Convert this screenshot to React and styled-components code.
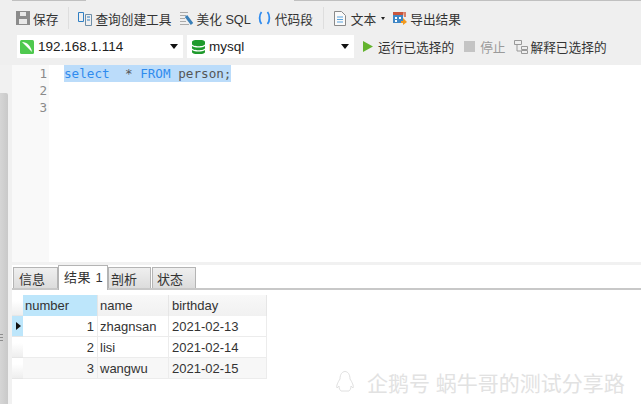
import React from "react";
import styled, { createGlobalStyle } from "styled-components";

const Global = createGlobalStyle`
  html, body { margin: 0; padding: 0; background: #fff; }
  body { font-family: "Liberation Sans", "Noto Sans CJK SC", sans-serif; }
`;

const Page = styled.div`
  width: 641px;
  height: 404px;
  display: flex;
  flex-direction: column;
  overflow: hidden;
  position: relative;
  background: #f1f1f1;
`;

const Bars = styled.div`
  height: 65px;
  flex: none;
  background: #efefef;
  box-sizing: border-box;
`;

const TopEdge = styled.div`
  height: 1px;
  display: flex;
  padding-left: 12px;
  margin-bottom: 6px;
`;

const EdgePiece = styled.span`
  background: #c0c0c0;
  width: ${p => p.$w}px;
  margin-right: ${p => p.$mr || 0}px;
`;

const Row = styled.div`
  display: flex;
  align-items: center;
  padding-left: 16px;
  height: ${p => p.$h}px;
  margin-bottom: ${p => p.$mb || 0}px;
`;

const Tool = styled.div`
  display: flex;
  align-items: center;
  gap: ${p => p.$gap || 3}px;
  font-size: 12.7px;
  color: ${p => (p.$off ? "#9a9a9a" : "#333")};
  margin-left: ${p => p.$ml || 0}px;
  white-space: nowrap;
`;

const Sep = styled.div`
  width: 1px;
  height: 22px;
  background: #dedede;
  margin-left: ${p => p.$ml}px;
`;

const SmallCaret = styled.span`
  border-left: 2.5px solid transparent;
  border-right: 2.5px solid transparent;
  border-top: 3px solid #222;
`;

const Select = styled.div`
  width: ${p => p.$w}px;
  height: 23px;
  margin-left: ${p => p.$ml || 0}px;
  background: #fff;
  display: flex;
  align-items: center;
  gap: 4px;
  padding-left: ${p => p.$pl}px;
  box-sizing: border-box;
  font-size: 13.5px;
  color: #222;
  position: relative;
`;

const Caret = styled.span`
  position: absolute;
  right: 5px;
  top: 9px;
  border-left: 4px solid transparent;
  border-right: 4px solid transparent;
  border-top: 5px solid #111;
`;

const Body = styled.div`
  flex: 1;
  min-height: 0;
  display: flex;
`;

const Rail = styled.div`
  width: 8px;
  flex: none;
  margin: 28px 4px 0 0;
  background: linear-gradient(90deg, #d6d6d6, #c9c9c9);
  border-top-right-radius: 2px;
  position: relative;
`;

const Grip = styled.span`
  position: absolute;
  left: 0;
  top: 241px;
  width: 3px;
  height: 7px;
  background: repeating-linear-gradient(180deg, #8e8e8e 0 1px, transparent 1px 3px);
`;

const Main = styled.div`
  flex: 1;
  min-width: 0;
  display: flex;
  flex-direction: column;
  background: #fff;
`;

const Editor = styled.div`
  height: 197px;
  flex: none;
  display: flex;
`;

const Gutter = styled.div`
  width: 37px;
  background: #f9f9f9;
  flex: none;
  padding: 0 2px 0 0;
  text-align: right;
  box-sizing: border-box;
`;

const Code = styled.div`
  padding-left: 15px;
`;

const Line = styled.div`
  font-family: "DejaVu Sans Mono", monospace;
  font-size: 12.65px;
  line-height: 17px;
  color: ${p => p.$c || "#555"};
  white-space: pre;
`;

const Picked = styled.span`
  display: inline-block;
  background: #bbdcfa;
`;

const Kw = styled.span`
  color: #2f8bee;
`;

const Split = styled.div`
  height: 3px;
  flex: none;
  background: #f1f1f1;
`;

const Tabs = styled.div`
  height: 25px;
  flex: none;
  display: flex;
  align-items: flex-end;
  padding-left: 1px;
  border-bottom: 2px solid #c8c8c8;
  box-sizing: border-box;
`;

const Tab = styled.div`
  width: ${p => p.$w}px;
  height: ${p => (p.$on ? 25 : 21)}px;
  padding-left: ${p => p.$pl}px;
  margin-right: ${p => p.$mr || 0}px;
  font-size: 13px;
  display: flex;
  align-items: center;
  flex: none;
  color: #333;
  box-sizing: border-box;
  background: ${p => (p.$on ? "#fff" : "linear-gradient(180deg, #efefef, #dcdcdc)")};
  border: 1px solid #b4b4b4;
  border-bottom: none;
  margin-bottom: ${p => (p.$on ? -2 : 0)}px;
  letter-spacing: ${p => (p.$on ? 0.6 : 0)}px;
  padding-bottom: ${p => (p.$on ? 3 : 0)}px;
`;

const Grid = styled.div`
  margin-top: 5px;
  display: grid;
  grid-template-columns: 11px 75px 71px 98px;
  width: 255px;
  font-size: 13px;
  color: #333;
`;

const Head = styled.div`
  height: 21px;
  line-height: 21px;
  padding-left: ${p => p.$pl || 2}px;
  background: ${p => (p.$on ? "#bde6fb" : "linear-gradient(180deg, #f8f8f8, #f1f1f1)")};
  border-right: 1px solid #e6e6e6;
  box-sizing: border-box;
`;

const Cell = styled.div`
  height: 21px;
  line-height: 22px;
  padding: 0 ${p => (p.$num ? 3 : 2)}px 0 ${p => p.$pl || 2}px;
  background: ${p => (p.$alt ? "#f7f7f7" : "#fff")};
  border-right: 1px solid #ececec;
  border-bottom: 1px solid #ececec;
  box-sizing: border-box;
  text-align: ${p => (p.$num ? "right" : "left")};
`;

const Marker = styled.div`
  height: 21px;
  background: ${p => (p.$on ? "#bde6fb" : "linear-gradient(180deg, #fff 30%, #eeeeee)")};
  border-bottom: 1px solid #e6e6e6;
  box-sizing: border-box;
  position: relative;
`;

const Arrow = styled.span`
  position: absolute;
  left: 4px;
  top: 6px;
  border-top: 4px solid transparent;
  border-bottom: 4px solid transparent;
  border-left: 5px solid #111;
`;

const Mark = styled.div`
  position: absolute;
  left: 335px;
  top: 367px;
  display: flex;
  align-items: center;
  gap: 12px;
  font-size: 21px;
  color: #e2e2e2;
  white-space: nowrap;
`;

const Save = () => (
  <svg width="14" height="14" viewBox="0 0 14 14"><path d="M0 0h14v14H0z" fill="#8b8b8b" /><path d="M4 1h6v4H4z" fill="#e8e8e8" /><path d="M3 8h8v5H3z" fill="#e8e8e8" /></svg>
);
const Build = () => (
  <svg width="14" height="15" viewBox="0 0 14 15" fill="none"><path d="M.5 1.500h5v9h-5z" stroke="#2f7fc4" /><path d="M7.500 3.500h6v11h-6z" stroke="#6f8fa8" /><path d="M9 6h3M9 9h3" stroke="#2f7fc4" /></svg>
);
const Beautify = () => (
  <svg width="14" height="15" viewBox="0 0 14 15" fill="none"><path d="M0 1.500h8M0 4.500h6M0 7.500h5M0 10.500h6M0 13.500h9" stroke="#aaa" /><path d="M6 5l6 8" stroke="#3a7fb8" strokeWidth="3" /></svg>
);
const Braces = () => (
  <svg width="13" height="14" viewBox="0 0 13 14" fill="none" stroke="#2f8bee" strokeWidth="1.800"><path d="M3.500 1C1 4 1 10 3.500 13" /><path d="M9.500 1c2.500 3 2.500 9 0 12" /></svg>
);
const Doc = () => (
  <svg width="12" height="15" viewBox="0 0 12 15" fill="none"><path d="M.5.500h7l4 4v10H.5z" fill="#fafafa" stroke="#8a8a8a" /><path d="M3 6h6M3 8.500h6M3 11h6" stroke="#5ba3dc" /></svg>
);
const Export = () => (
  <svg width="14" height="14" viewBox="0 0 14 14"><path d="M0 1h10v11H0z" fill="#3f87c6" /><path d="M0 1h10v3H0z" fill="#c9553c" /><path d="M2 6h2v2H2zM6 6h2v2H6zM2 9h2v2H2z" fill="#fff" /><path d="M10 1h3v5h-2z" fill="#d9826b" /><path d="M8 10h2V7l4 4-4 3v-2H8z" fill="#f29a1f" /></svg>
);
const Conn = () => (
  <svg width="14" height="14" viewBox="0 0 14 14"><rect width="14" height="14" rx="1.500" fill="#4fc94f" /><path d="M2 2c5 0 9 4 10 10L8 8z" fill="#fff" /></svg>
);
const Db = () => (
  <svg width="13" height="14" viewBox="0 0 13 14"><path d="M0 2c0-3 13-3 13 0v2c0 3-13 3-13 0zM0 6c3 2 10 2 13 0v2c0 3-13 3-13 0zM0 10c3 2 10 2 13 0v2c0 3-13 3-13 0z" fill="#1f9a2c" /></svg>
);
const Play = () => (
  <svg width="10" height="11" viewBox="0 0 10 11"><path d="M0 0l10 5.500L0 11z" fill="#63b32e" /></svg>
);
const Stop = () => (
  <svg width="11" height="11" viewBox="0 0 11 11"><path d="M0 0h11v11H0z" fill="#c4c4c4" /></svg>
);
const Explain = () => (
  <svg width="14" height="14" viewBox="0 0 14 14" fill="none" stroke="#999"><path d="M.5.500h7v4h-7zM7.500 6.500h6v3h-6zM7.500 10.500h6v3h-6zM3 5v6h4" /></svg>
);
const Qq = () => (
  <svg width="20" height="24" viewBox="0 0 20 24" fill="none" stroke="#e0e0e0" strokeWidth="1"><path d="M5 9c0-10 10-10 10 0 2 3 4 7 3 9l-2-2c0 3-1 4-2 5H6c-1-1-2-2-2-5l-2 2c-1-2 1-6 3-9z" /></svg>
);

const rows = [
  ["1", "zhagnsan", "2021-02-13"],
  ["2", "lisi", "2021-02-14"],
  ["3", "wangwu", "2021-02-15"],
];

export default function App() {
  return (
    <Page>
      <Global />
      <Bars>
        <TopEdge>
          <EdgePiece $w={74} $mr={208} />
          <EdgePiece $w={347} />
        </TopEdge>
        <Row $h={22} $mb={6}>
          <Tool><Save />保存</Tool>
          <Sep $ml={10} />
          <Tool $ml={9}><Build />查询创建工具</Tool>
          <Tool $ml={8}><Beautify />美化 SQL</Tool>
          <Tool $ml={7} $gap={4}><Braces />代码段</Tool>
          <Sep $ml={10} />
          <Tool $ml={10} $gap={5}><Doc />文本<SmallCaret /></Tool>
          <Tool $ml={8}><Export />导出结果</Tool>
        </Row>
        <Row $h={23}>
          <Select $w={166} $ml={1} $pl={3}><Conn />192.168.1.114<Caret /></Select>
          <Select $w={167} $ml={4} $pl={5}><Db />mysql<Caret /></Select>
          <Tool $ml={9} $gap={5}><Play />运行已选择的</Tool>
          <Tool $ml={10} $gap={5} $off><Stop />停止</Tool>
          <Tool $ml={8}><Explain />解释已选择的</Tool>
        </Row>
      </Bars>
      <Body>
        <Rail><Grip /></Rail>
        <Main>
          <Editor>
            <Gutter>
              <Line $c="#8a8a8a">1</Line>
              <Line $c="#8a8a8a">2</Line>
              <Line $c="#8a8a8a">3</Line>
            </Gutter>
            <Code>
              <Line><Picked><Kw>select</Kw>  * <Kw>FROM</Kw> person;</Picked></Line>
            </Code>
          </Editor>
          <Split />
          <Tabs>
            <Tab $w={45} $pl={5}>信息</Tab>
            <Tab $on $w={50} $pl={5}>结果 1</Tab>
            <Tab $w={43} $pl={2} $mr={1}>剖析</Tab>
            <Tab $w={44} $pl={4}>状态</Tab>
          </Tabs>
          <Grid>
            <Marker />
            <Head $on>number</Head>
            <Head>name</Head>
            <Head $pl={3}>birthday</Head>
            {rows.map((r, i) => (
              <React.Fragment key={r[0]}>
                <Marker $on={i === 0}>{i === 0 && <Arrow />}</Marker>
                <Cell $num $alt={i === 2}>{r[0]}</Cell>
                <Cell $alt={i === 2}>{r[1]}</Cell>
                <Cell $pl={3} $alt={i === 2}>{r[2]}</Cell>
              </React.Fragment>
            ))}
          </Grid>
        </Main>
      </Body>
      <Mark><Qq />企鹅号 蜗牛哥的测试分享路</Mark>
    </Page>
  );
}
